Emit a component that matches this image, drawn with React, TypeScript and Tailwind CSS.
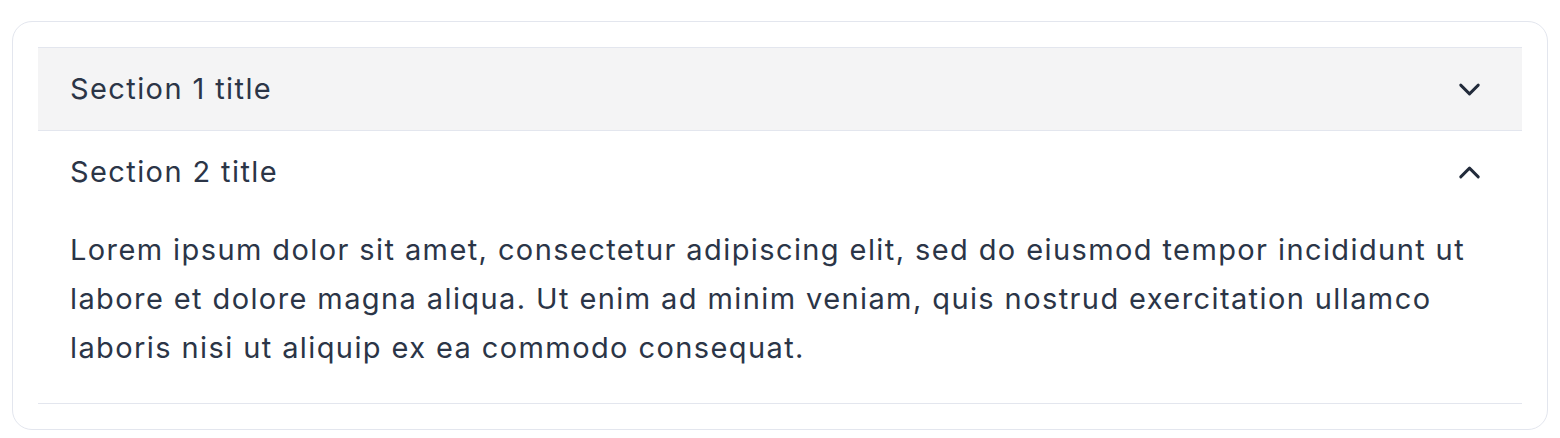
import { ChevronDown, ChevronUp } from "lucide-react";

const body =
  "Lorem ipsum dolor sit amet, consectetur adipiscing elit, sed do eiusmod tempor incididunt ut labore et dolore magna aliqua. Ut enim ad minim veniam, quis nostrud exercitation ullamco laboris nisi ut aliquip ex ea commodo consequat.";

export default function App() {
  return (
    <div className="bg-white px-3 pt-[21px] font-['Inter',sans-serif] text-[#2b3547] tracking-[1.4px]">
      <div className="rounded-[20px] border border-[#e3e6ee] p-[25px]">
        <div className="border-t border-[#e3e6ee]">
          <button className="flex h-[83px] w-full items-center justify-between border-b border-[#e3e6ee] bg-[#f4f4f5] pl-[32px] pr-[35px] text-left text-[29px]">
            <span>Section 1 title</span>
            <ChevronDown size={35} strokeWidth={2} className="text-[#222b3b]" />
          </button>
          <div className="border-b border-[#e3e6ee]">
            <button className="flex h-[82px] w-full items-center justify-between pl-[32px] pr-[35px] text-left text-[29px]">
              <span>Section 2 title</span>
              <ChevronUp size={35} strokeWidth={2} className="text-[#222b3b]" />
            </button>
            <p className="pb-[31px] pl-[32px] pr-[40px] pt-[12px] text-[29px] leading-[49px]">
              {body}
            </p>
          </div>
        </div>
      </div>
    </div>
  );
}
